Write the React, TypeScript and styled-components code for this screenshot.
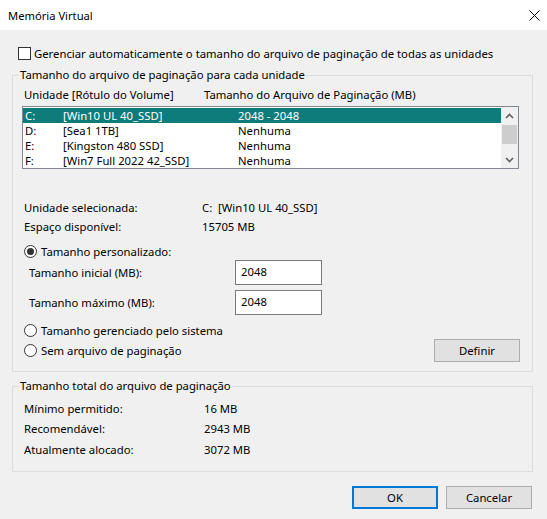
import React from "react";
import styled, { createGlobalStyle } from "styled-components";

const GlobalStyle = createGlobalStyle`
  html, body { margin: 0; padding: 0; }
  body {
    background: #f0f0f0;
    font-family: "Noto Sans", "Open Sans", sans-serif;
    font-size: 11.3px;
    color: #000;
  }
`;

const Window = styled.div`
  width: 547px;
  height: 519px;
  display: flex;
  flex-direction: column;
  background: #f0f0f0;
  overflow: hidden;
`;

const TitleBar = styled.div`
  height: 30px;
  flex-shrink: 0;
  background: #fff;
  display: flex;
  align-items: center;
  justify-content: space-between;
  padding-left: 8px;
  font-size: 11.2px;
`;

const CloseButton = styled.div`
  width: 26px;
  height: 30px;
  display: flex;
  align-items: center;
  justify-content: center;
`;

const Body = styled.div`
  flex: 1;
  display: flex;
  flex-direction: column;
  padding: 17px 14px 0 12px;
`;

const CheckRow = styled.label`
  display: flex;
  align-items: center;
  gap: 3px;
  height: 13px;
  margin-left: 6px;
`;

const CheckBox = styled.span`
  width: 13px;
  height: 13px;
  box-sizing: border-box;
  border: 1px solid #333;
  background: #fff;
  flex-shrink: 0;
`;

const Group = styled.fieldset<{ $mt: number; $pb: number }>`
  margin: ${(p) => p.$mt}px 0 0 0;
  padding: 0 0 ${(p) => p.$pb}px 0;
  border: 1px solid #dcdcdc;
  min-width: 0;
  display: flex;
  flex-direction: column;
`;

const Legend = styled.legend`
  margin-left: 6px;
  padding: 0 1px;
  line-height: 16px;
  height: 16px;
`;

const HeaderRow = styled.div`
  display: grid;
  grid-template-columns: 180px 1fr;
  padding-left: 11px;
  height: 15px;
  line-height: 15px;
  margin-top: 4px;
`;

const ListBox = styled.div`
  margin: 4px 13px 0 9px;
  height: 63px;
  box-sizing: border-box;
  border: 1px solid #828790;
  background: #fff;
  display: flex;
`;

const Rows = styled.div`
  flex: 1;
  padding-top: 1px;
`;

const Row = styled.div<{ $selected?: boolean }>`
  display: grid;
  grid-template-columns: 38px 175px 1fr;
  height: 15px;
  line-height: 15px;
  padding-left: 2px;
  white-space: nowrap;
  background: ${(p) => (p.$selected ? "#0e7c7b" : "transparent")};
  color: ${(p) => (p.$selected ? "#fff" : "#000")};
`;

const ScrollBar = styled.div`
  width: 17px;
  background: #f0f0f0;
  display: flex;
  flex-direction: column;
  align-items: center;
`;

const ScrollArrow = styled.div`
  width: 17px;
  height: 17px;
  display: flex;
  align-items: center;
  justify-content: center;
`;

const ScrollTrack = styled.div`
  flex: 1;
  width: 15px;
  padding-top: 1px;
`;

const Thumb = styled.div`
  height: 19px;
  background: #cdcdcd;
`;

const InfoGrid = styled.div<{ $mt: number; $row: number; $col: number }>`
  display: grid;
  grid-template-columns: ${(p) => p.$col}px 1fr;
  grid-auto-rows: ${(p) => p.$row}px;
  align-items: center;
  padding-left: 11px;
  margin-top: ${(p) => p.$mt}px;
  white-space: pre;
`;

const RadioRow = styled.label<{ $mt?: number }>`
  display: flex;
  align-items: center;
  gap: 4px;
  height: 18px;
  margin-left: 11px;
  margin-top: ${(p) => p.$mt ?? 0}px;
`;

const Radio = styled.span<{ $checked?: boolean }>`
  width: 13px;
  height: 13px;
  box-sizing: border-box;
  border: 1px solid #333;
  border-radius: 50%;
  background: #fff;
  flex-shrink: 0;
  display: flex;
  align-items: center;
  justify-content: center;
  &::after {
    content: "";
    display: ${(p) => (p.$checked ? "block" : "none")};
    width: 7px;
    height: 7px;
    border-radius: 50%;
    background: #333;
  }
`;

const SizeGrid = styled.div`
  display: grid;
  grid-template-columns: 206px 87px;
  grid-auto-rows: 25px;
  row-gap: 5px;
  align-items: center;
  padding-left: 16px;
`;

const NumberBox = styled.div`
  height: 25px;
  box-sizing: border-box;
  border: 1px solid #7a7a7a;
  background: #fff;
  padding-left: 5px;
  line-height: 22px;
`;

const LastRow = styled.div`
  display: flex;
  align-items: center;
  justify-content: space-between;
  height: 23px;
  padding-right: 12px;
`;

const Button = styled.button<{ $default?: boolean }>`
  width: 86px;
  height: 23px;
  box-sizing: border-box;
  margin: 0;
  padding: 0;
  font: inherit;
  color: #000;
  background: #e1e1e1;
  border: ${(p) => (p.$default ? "2px solid #0078d7" : "1px solid #adadad")};
`;

const ButtonBar = styled.div`
  display: flex;
  justify-content: flex-end;
  gap: 8px;
  margin-top: 14px;
  padding-right: 1px;
`;

const Chevron = ({ up }: { up?: boolean }) => (
  <svg width="9" height="6" viewBox="0 0 9 6">
    <path
      d={up ? "M1 5 L4.5 1.5 L8 5" : "M1 1 L4.5 4.5 L8 1"}
      fill="none"
      stroke="#606060"
      strokeWidth="1.6"
    />
  </svg>
);

const drives = [
  { d: "C:", label: "[Win10 UL 40_SSD]", size: "2048 - 2048", sel: true },
  { d: "D:", label: "[Sea1 1TB]", size: "Nenhuma" },
  { d: "E:", label: "[Kingston 480 SSD]", size: "Nenhuma" },
  { d: "F:", label: "[Win7 Full 2022 42_SSD]", size: "Nenhuma" },
];

export default function App() {
  return (
    <>
      <GlobalStyle />
      <Window>
        <TitleBar>
          <span>Memória Virtual</span>
          <CloseButton>
            <svg width="11" height="11" viewBox="0 0 11 11">
              <path d="M0.5 0.5 L10.5 10.5 M10.5 0.5 L0.5 10.5" stroke="#000" strokeWidth="1" />
            </svg>
          </CloseButton>
        </TitleBar>
        <Body>
          <CheckRow>
            <CheckBox />
            <span>Gerenciar automaticamente o tamanho do arquivo de paginação de todas as unidades</span>
          </CheckRow>

          <Group $mt={7} $pb={9}>
            <Legend>Tamanho do arquivo de paginação para cada unidade</Legend>
            <HeaderRow>
              <span>Unidade [Rótulo do Volume]</span>
              <span>Tamanho do Arquivo de Paginação (MB)</span>
            </HeaderRow>
            <ListBox>
              <Rows>
                {drives.map((r) => (
                  <Row key={r.d} $selected={r.sel}>
                    <span>{r.d}</span>
                    <span>{r.label}</span>
                    <span>{r.size}</span>
                  </Row>
                ))}
              </Rows>
              <ScrollBar>
                <ScrollArrow>
                  <Chevron up />
                </ScrollArrow>
                <ScrollTrack>
                  <Thumb />
                </ScrollTrack>
                <ScrollArrow>
                  <Chevron />
                </ScrollArrow>
              </ScrollBar>
            </ListBox>

            <InfoGrid $mt={29} $row={19} $col={178}>
              <span>Unidade selecionada:</span>
              <span>C:  [Win10 UL 40_SSD]</span>
              <span>Espaço disponível:</span>
              <span>15705 MB</span>
            </InfoGrid>

            <RadioRow $mt={6}>
              <Radio $checked />
              <span>Tamanho personalizado:</span>
            </RadioRow>
            <SizeGrid>
              <span>Tamanho inicial (MB):</span>
              <NumberBox>2048</NumberBox>
              <span>Tamanho máximo (MB):</span>
              <NumberBox>2048</NumberBox>
            </SizeGrid>
            <RadioRow $mt={6}>
              <Radio />
              <span>Tamanho gerenciado pelo sistema</span>
            </RadioRow>
            <LastRow>
              <RadioRow>
                <Radio />
                <span>Sem arquivo de paginação</span>
              </RadioRow>
              <Button>Definir</Button>
            </LastRow>
          </Group>

          <Group $mt={6} $pb={11}>
            <Legend>Tamanho total do arquivo de paginação</Legend>
            <InfoGrid $mt={4} $row={20.5} $col={180}>
              <span>Mínimo permitido:</span>
              <span>16 MB</span>
              <span>Recomendável:</span>
              <span>2943 MB</span>
              <span>Atualmente alocado:</span>
              <span>3072 MB</span>
            </InfoGrid>
          </Group>

          <ButtonBar>
            <Button $default>OK</Button>
            <Button>Cancelar</Button>
          </ButtonBar>
        </Body>
      </Window>
    </>
  );
}
